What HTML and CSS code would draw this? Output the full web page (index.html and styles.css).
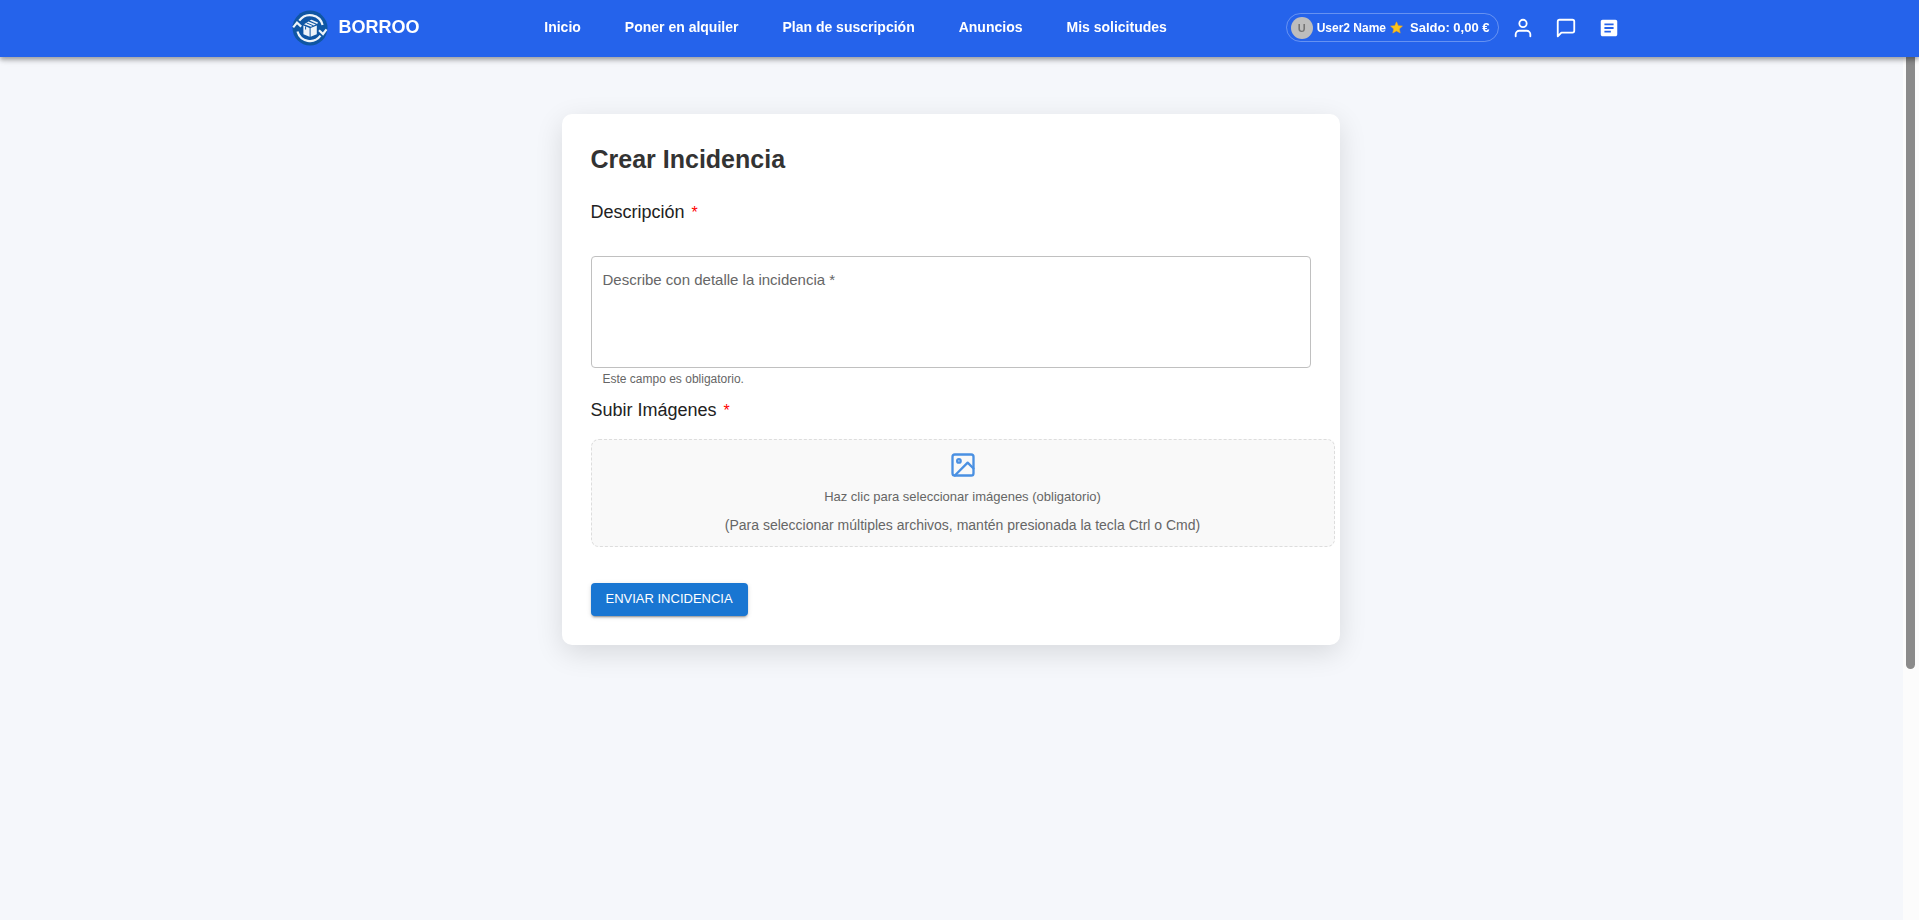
FILE: index.html
```html
<!DOCTYPE html>
<html lang="es">
<head>
<meta charset="utf-8">
<meta name="viewport" content="width=device-width, initial-scale=1">
<title>Borroo - Crear Incidencia</title>
<link rel="stylesheet" href="styles.css">
</head>
<body>
<header class="topbar">
  <div class="topbar-inner">
    <a class="brand" href="#">
      <svg class="brand-logo" viewBox="0 0 36 36" aria-hidden="true">
        <circle cx="18" cy="18" r="17.5" fill="#0f56a3"/>
        <g fill="none" stroke="#eef4fa" stroke-width="2.2">
          <path d="M5.5 21.5A13 13 0 0 0 28.5 25.7"/>
          <path d="M30.6 15A13 13 0 0 0 7.3 10.7"/>
          <path d="M1.2 17.4 5 12.6 9.2 16.6"/>
          <path d="M27 20.3 31 24 34.5 19.3"/>
        </g>
        <g fill="#eef4fa">
          <path d="M11.4 15.4 17.6 18V26.8L11.4 24.2Z"/>
          <path d="M24.8 15.4 18.6 18V26.8L24.8 24.2Z"/>
          <path d="M12 14.2 16.5 11.6 23.8 14.6 19 16.8Z"/>
          <path d="M17.5 10.6 19.5 9.8 26 12.6 25.2 14Z"/>
        </g>
        <path d="M14.5 12.9 21.5 15.8M13.6 16.4V19.5" stroke="#0f56a3" stroke-width="1" fill="none"/>
      </svg>
      <span class="brand-name">BORROO</span>
    </a>
    <nav class="nav">
      <a href="#">Inicio</a>
      <a href="#">Poner en alquiler</a>
      <a href="#">Plan de suscripción</a>
      <a href="#">Anuncios</a>
      <a href="#">Mis solicitudes</a>
    </nav>
    <div class="account">
      <a class="user-pill" href="#">
        <span class="avatar">U</span>
        <span>User2 Name</span>
        <svg class="star" viewBox="0 0 24 24" aria-hidden="true"><path d="M12 1.5 15.2 8.6 23 9.4 17.2 14.6 18.9 22.3 12 18.3 5.1 22.3 6.8 14.6 1 9.4 8.8 8.6Z" fill="#fcc419" stroke="#f3a51c" stroke-width="1"/></svg>
        <span class="balance">Saldo: 0,00 €</span>
      </a>
      <button class="icon-button" type="button" aria-label="Perfil">
        <svg viewBox="0 0 24 24"><path d="M20 21v-2a4 4 0 0 0-4-4H8a4 4 0 0 0-4 4v2"/><circle cx="12" cy="7" r="4"/></svg>
      </button>
      <button class="icon-button" type="button" aria-label="Mensajes">
        <svg viewBox="0 0 24 24"><path d="M21 15a2 2 0 0 1-2 2H7l-4 4V5a2 2 0 0 1 2-2h14a2 2 0 0 1 2 2z"/></svg>
      </button>
      <button class="icon-button icon-solid" type="button" aria-label="Incidencias">
        <svg viewBox="0 0 24 24"><path d="M19 3H5c-1.100 0-2 .9-2 2v14c0 1.100.9 2 2 2h14c1.100 0 2-.9 2-2V5c0-1.100-.9-2-2-2zm-5 14H7v-2h7v2zm3-4H7v-2h10v2zm0-4H7V7h10v2z"/></svg>
      </button>
    </div>
  </div>
</header>
<main class="page">
  <form class="card">
    <h1 class="title">Crear Incidencia</h1>
    <label class="field-label" for="descripcion">Descripción <span class="required">*</span></label>
    <textarea class="description" id="descripcion" placeholder="Describe con detalle la incidencia *" aria-describedby="ayuda"></textarea>
    <p class="helper" id="ayuda">Este campo es obligatorio.</p>
    <label class="field-label" for="imagenes">Subir Imágenes <span class="required">*</span></label>
    <label class="upload">
      <input class="file-input" id="imagenes" type="file" accept="image/*" multiple>
      <svg class="upload-icon" viewBox="0 0 24 24" aria-hidden="true"><rect x="3" y="3" width="18" height="18" rx="2"/><circle cx="8.5" cy="8.5" r="1.5"/><path d="M21 15 16 10 5 21"/></svg>
      <span>Haz clic para seleccionar imágenes (obligatorio)</span>
      <span class="upload-hint">(Para seleccionar múltiples archivos, mantén presionada la tecla Ctrl o Cmd)</span>
    </label>
    <button class="submit" type="submit">ENVIAR INCIDENCIA</button>
  </form>
</main>
<div class="scroll-track" aria-hidden="true"><div class="scroll-thumb"></div></div>
</body>
</html>
```
FILE: styles.css
```css
* { box-sizing: border-box; }
body {
  margin: 0;
  min-height: 100vh;
  background: #f5f7fb;
  color: #222;
  font-family: "Liberation Sans", Arial, sans-serif;
  overflow: hidden;
}
a { color: inherit; text-decoration: none; }

.topbar {
  position: relative;
  z-index: 2;
  background: #2563eb;
  color: #fff;
  box-shadow: 0 2px 4px rgba(0, 0, 0, .2), 0 4px 5px rgba(0, 0, 0, .14), 0 1px 9px rgba(0, 0, 0, .12);
}
.topbar-inner {
  display: flex;
  align-items: center;
  justify-content: space-between;
  max-width: 1338px;
  height: 57px;
  margin: 0 auto;
  padding: 0 0 2px 1px;
}
.brand { display: flex; align-items: center; gap: 11px; }
.brand-logo { width: 36px; height: 36px; }
.brand-name { font-size: 18px; font-weight: 700; }
.nav {
  display: flex;
  gap: 44px;
  padding: 0 0 2px 6px;
  font-size: 14px;
  font-weight: 700;
}
.account { display: flex; align-items: center; gap: 5px; }
.user-pill {
  display: flex;
  align-items: center;
  gap: 4px;
  height: 29px;
  padding: 0 9px 0 4px;
  border: 1px solid rgba(255, 255, 255, .3);
  border-radius: 15px;
  font-size: 12px;
  font-weight: 700;
}
.avatar {
  display: grid;
  place-items: center;
  width: 22px;
  height: 22px;
  border-radius: 50%;
  background: #bdbdbd;
  color: #757575;
  font-size: 11px;
}
.star { width: 13px; height: 13px; }
.balance { margin-left: 3px; font-size: 13px; }
.icon-button {
  display: grid;
  place-items: center;
  width: 38px;
  height: 38px;
  padding: 0;
  border: 0;
  background: none;
}
.icon-button svg {
  width: 22px;
  height: 22px;
  fill: none;
  stroke: #fff;
  stroke-width: 2;
  stroke-linecap: round;
  stroke-linejoin: round;
}
.icon-button.icon-solid svg { fill: #fff; stroke: none; }

.page { padding: 57px 18px 0 0; }
.card {
  display: flex;
  flex-direction: column;
  align-items: stretch;
  max-width: 778px;
  margin: 0 auto;
  padding: 29px;
  border-radius: 10px;
  background: #fff;
  box-shadow: 0 8px 28px rgba(0, 0, 0, .12);
}
.title { margin: 0 0 25px; color: #333; font-size: 25px; line-height: 32px; }
.field-label { font-size: 18px; line-height: 24px; }
.required { margin-left: 2px; color: #f00; font-size: 16px; }
.description {
  height: 112px;
  margin-top: 31px;
  padding: 14px 11px;
  border: 1px solid #c0c0c0;
  border-radius: 4px;
  background: #fff;
  font: 15px/18px "Liberation Sans", Arial, sans-serif;
  resize: none;
}
.description::placeholder { color: #666; opacity: 1; }
.helper { margin: 3px 12px 11px; color: #666; font-size: 12px; line-height: 16px; }
.upload {
  position: relative;
  display: flex;
  flex-direction: column;
  align-items: center;
  margin: 16px -24px 0 0;
  padding: 11px 14px 7px;
  border: 1px dashed #ddd;
  border-radius: 8px;
  background: #f9f9f9;
  color: #666;
  font-size: 13px;
  line-height: 28px;
}
.upload-hint { font-size: 14px; }
.file-input { position: absolute; inset: 0; opacity: 0; }
.upload-icon {
  width: 28px;
  height: 28px;
  margin-bottom: 4px;
  fill: none;
  stroke: #4a90e2;
  stroke-width: 2;
  stroke-linecap: round;
  stroke-linejoin: round;
}
.submit {
  align-self: flex-start;
  height: 33px;
  margin-top: 36px;
  padding: 0 15px 2px;
  border: 0;
  border-radius: 4px;
  background: #1976d2;
  color: #fff;
  font: 13px/20px "Liberation Sans", Arial, sans-serif;
  box-shadow: 0 3px 1px -2px rgba(0, 0, 0, .2), 0 2px 2px rgba(0, 0, 0, .14), 0 1px 5px rgba(0, 0, 0, .12);
}

.scroll-track {
  position: fixed;
  inset: 0 0 0 auto;
  width: 16px;
  padding: 0 4px 0 3px;
  background: #fcfcfc;
}
.scroll-thumb { height: 669px; border-radius: 5px; background: #8b8b8b; }
```
